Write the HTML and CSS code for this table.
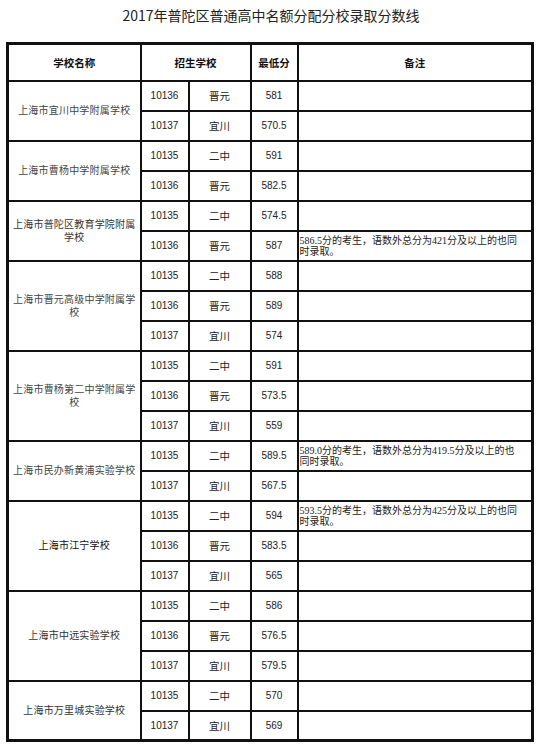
FILE: index.html
```html
<!DOCTYPE html>
<html lang="zh-CN">
<head>
<meta charset="utf-8">
<title>2017年普陀区普通高中名额分配分校录取分数线</title>
<link rel="stylesheet" href="styles.css">
</head>
<body>
<div class="page">
  <h1 class="title">2017年普陀区普通高中名额分配分校录取分数线</h1>
  <table class="scores">
    <colgroup>
      <col class="c-name">
      <col class="c-code">
      <col class="c-school">
      <col class="c-min">
      <col class="c-note">
    </colgroup>
    <thead>
      <tr class="head">
        <th>学校名称</th>
        <th colspan="2">招生学校</th>
        <th>最低分</th>
        <th>备注</th>
      </tr>
    </thead>
    <tbody>
      <tr>
        <td rowspan="2" class="name serif">上海市宜川中学附属学校</td>
        <td class="num">10136</td><td class="cn">晋元</td><td class="num">581</td><td class="note"></td>
      </tr>
      <tr>
        <td class="num">10137</td><td class="cn">宜川</td><td class="num">570.5</td><td class="note"></td>
      </tr>

      <tr>
        <td rowspan="2" class="name serif">上海市曹杨中学附属学校</td>
        <td class="num">10135</td><td class="cn">二中</td><td class="num">591</td><td class="note"></td>
      </tr>
      <tr>
        <td class="num">10136</td><td class="cn">晋元</td><td class="num">582.5</td><td class="note"></td>
      </tr>

      <tr>
        <td rowspan="2" class="name">上海市普陀区教育学院附属学校</td>
        <td class="num">10135</td><td class="cn">二中</td><td class="num">574.5</td><td class="note"></td>
      </tr>
      <tr>
        <td class="num">10136</td><td class="cn">晋元</td><td class="num">587</td>
        <td class="note">586.5分的考生，语数外总分为421分及以上的也同<br>时录取。</td>
      </tr>

      <tr>
        <td rowspan="3" class="name serif">上海市晋元高级中学附属学校</td>
        <td class="num">10135</td><td class="cn">二中</td><td class="num">588</td><td class="note"></td>
      </tr>
      <tr>
        <td class="num">10136</td><td class="cn">晋元</td><td class="num">589</td><td class="note"></td>
      </tr>
      <tr>
        <td class="num">10137</td><td class="cn">宜川</td><td class="num">574</td><td class="note"></td>
      </tr>

      <tr>
        <td rowspan="3" class="name serif">上海市曹杨第二中学附属学校</td>
        <td class="num">10135</td><td class="cn">二中</td><td class="num">591</td><td class="note"></td>
      </tr>
      <tr>
        <td class="num">10136</td><td class="cn">晋元</td><td class="num">573.5</td><td class="note"></td>
      </tr>
      <tr>
        <td class="num">10137</td><td class="cn">宜川</td><td class="num">559</td><td class="note"></td>
      </tr>

      <tr>
        <td rowspan="2" class="name serif">上海市民办新黄浦实验学校</td>
        <td class="num">10135</td><td class="cn">二中</td><td class="num">589.5</td>
        <td class="note">589.0分的考生，语数外总分为419.5分及以上的也<br>同时录取。</td>
      </tr>
      <tr>
        <td class="num">10137</td><td class="cn">宜川</td><td class="num">567.5</td><td class="note"></td>
      </tr>

      <tr>
        <td rowspan="3" class="name strong">上海市江宁学校</td>
        <td class="num">10135</td><td class="cn">二中</td><td class="num">594</td>
        <td class="note">593.5分的考生，语数外总分为425分及以上的也同<br>时录取。</td>
      </tr>
      <tr>
        <td class="num">10136</td><td class="cn">晋元</td><td class="num">583.5</td><td class="note"></td>
      </tr>
      <tr>
        <td class="num">10137</td><td class="cn">宜川</td><td class="num">565</td><td class="note"></td>
      </tr>

      <tr>
        <td rowspan="3" class="name">上海市中远实验学校</td>
        <td class="num">10135</td><td class="cn">二中</td><td class="num">586</td><td class="note"></td>
      </tr>
      <tr>
        <td class="num">10136</td><td class="cn">晋元</td><td class="num">576.5</td><td class="note"></td>
      </tr>
      <tr>
        <td class="num">10137</td><td class="cn">宜川</td><td class="num">579.5</td><td class="note"></td>
      </tr>

      <tr>
        <td rowspan="2" class="name">上海市万里城实验学校</td>
        <td class="num">10135</td><td class="cn">二中</td><td class="num">570</td><td class="note"></td>
      </tr>
      <tr>
        <td class="num">10137</td><td class="cn">宜川</td><td class="num">569</td><td class="note"></td>
      </tr>
    </tbody>
  </table>
</div>
</body>
</html>
```
FILE: styles.css
```css
html, body {
  margin: 0;
  padding: 0;
  background: #fff;
}

.page {
  width: 542px;
  height: 750px;
  overflow: hidden;
  color: #222;
  font-family: "Noto Sans CJK SC", "Noto Sans", sans-serif;
}

.title {
  margin: 0;
  height: 31px;
  line-height: 31px;
  font-size: 14px;
  font-weight: normal;
  text-align: center;
  color: #222;
}

.scores {
  margin: 11px 0 0 6px;
  width: 525px;
  table-layout: fixed;
  border-collapse: collapse;
  border: 3px solid #111;
}

.c-name { width: 133px; }
.c-code { width: 48px; }
.c-school { width: 62px; }
.c-min { width: 47px; }
.c-note { width: 235px; }

.scores th,
.scores td {
  border: 2px solid #111;
  padding: 0;
  vertical-align: middle;
  text-align: center;
}

.scores tr { height: 30px; }
.scores tr.head { height: 37px; }

.scores th {
  font-size: 10.5px;
  font-weight: bold;
  color: #111;
}

.num {
  font-family: "Liberation Sans", Arial, sans-serif;
  font-size: 10px;
  color: #222;
}

.cn {
  font-size: 10.5px;
  color: #222;
}

.name {
  font-size: 10px;
  letter-spacing: 0.2px;
  line-height: 12.5px;
  padding: 0 2px !important;
  color: #333;
}

.name.serif {
  color: #444;
}

.name.strong {
  color: #111;
}

.note {
  text-align: left !important;
  padding: 0 0 0 1px !important;
  font-family: "Liberation Serif", "Noto Sans CJK SC", serif;
  font-size: 10px;
  line-height: 11px;
  color: #222;
}
```
